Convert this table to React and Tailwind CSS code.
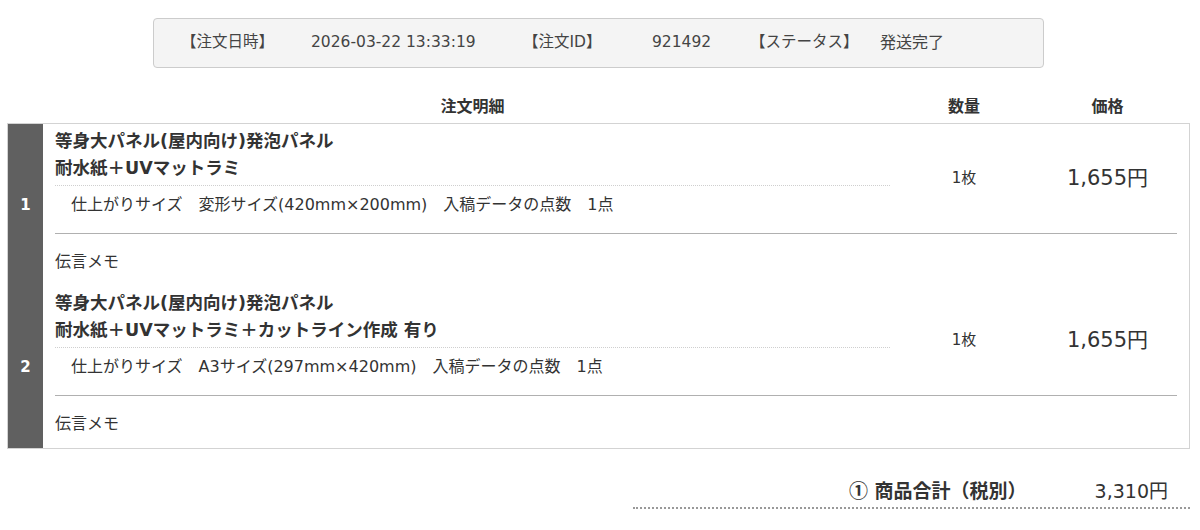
import React from "react";

const FONT = { fontFamily: '"DejaVu Sans", "Noto Sans CJK JP", sans-serif' };
const CJK = { fontFamily: '"Noto Sans CJK JP", sans-serif' };

function Item({ no, line1, line2, spec, qty, price }) {
  return (
    <div className="flex">
      <div className="w-[35px] shrink-0 bg-[#606060] flex items-center justify-center text-white font-bold text-[15px]">
        {no}
      </div>
      <div className="flex-1 pl-[12px] pr-[12px]">
        <div className="grid grid-cols-[835px_148px_139px] items-center border-b border-[#b0b0b0]">
          <div className="pt-[4px] pb-[14px]">
            <div className="font-bold text-[17.5px] leading-[27px] text-[#333]">
              <div>{line1}</div>
              <div>{line2}</div>
            </div>
            <div className="mt-[3px] border-t border-dotted border-[#cfcfcf] pt-[5px] pl-[16px] leading-[28px] text-[#333]">
              {spec}
            </div>
          </div>
          <div className="text-center text-[15px] text-[#333]">{qty}</div>
          <div className="text-center text-[21px] text-[#333]">{price}</div>
        </div>
        <div className="pt-[14px] pb-[10px] leading-[28px] text-[#333]">伝言メモ</div>
      </div>
    </div>
  );
}

export default function App() {
  return (
    <div className="w-[1200px] h-[530px] bg-white text-[16px] text-[#333] overflow-hidden" style={FONT}>
      <div className="pt-[18px]">
        <div className="ml-[153px] w-[891px] h-[50px] border border-[#cccccc] rounded-[4px] bg-[#f4f4f4] flex items-center pl-[27px] text-[#444] text-[15.5px]">
          <span className="w-[130px]">【注文日時】</span>
          <span className="w-[212px]">2026-03-22 13:33:19</span>
          <span className="w-[129px]">【注文ID】</span>
          <span className="w-[98px]">921492</span>
          <span className="w-[130px]">【ステータス】</span>
          <span className="text-[16px]">発送完了</span>
        </div>
      </div>

      <div className="mt-[23px] h-[32px] ml-[55px] grid grid-cols-[835px_148px_139px] items-center font-bold text-[16px] text-[#333]">
        <div className="text-center">注文明細</div>
        <div className="text-center">数量</div>
        <div className="text-center">価格</div>
      </div>

      <div className="ml-[7px] w-[1183px] border border-[#d3d3d3]">
        <Item
          no="1"
          line1="等身大パネル(屋内向け)発泡パネル"
          line2="耐水紙＋UVマットラミ"
          spec="仕上がりサイズ　変形サイズ(420mm×200mm)　入稿データの点数　1点"
          qty="1枚"
          price="1,655円"
        />
        <Item
          no="2"
          line1="等身大パネル(屋内向け)発泡パネル"
          line2="耐水紙＋UVマットラミ＋カットライン作成 有り"
          spec="仕上がりサイズ　A3サイズ(297mm×420mm)　入稿データの点数　1点"
          qty="1枚"
          price="1,655円"
        />
      </div>

      <div className="mt-[26px] ml-[633px] w-[557px] h-[34px] flex items-center justify-end pr-[22px] border-b-2 border-dotted border-[#999]">
        <span className="font-bold text-[19px] text-[#333]">
          <span style={CJK}>①</span> 商品合計（税別）
        </span>
        <span className="ml-[68px] text-[19px] text-[#333]">3,310円</span>
      </div>
    </div>
  );
}
